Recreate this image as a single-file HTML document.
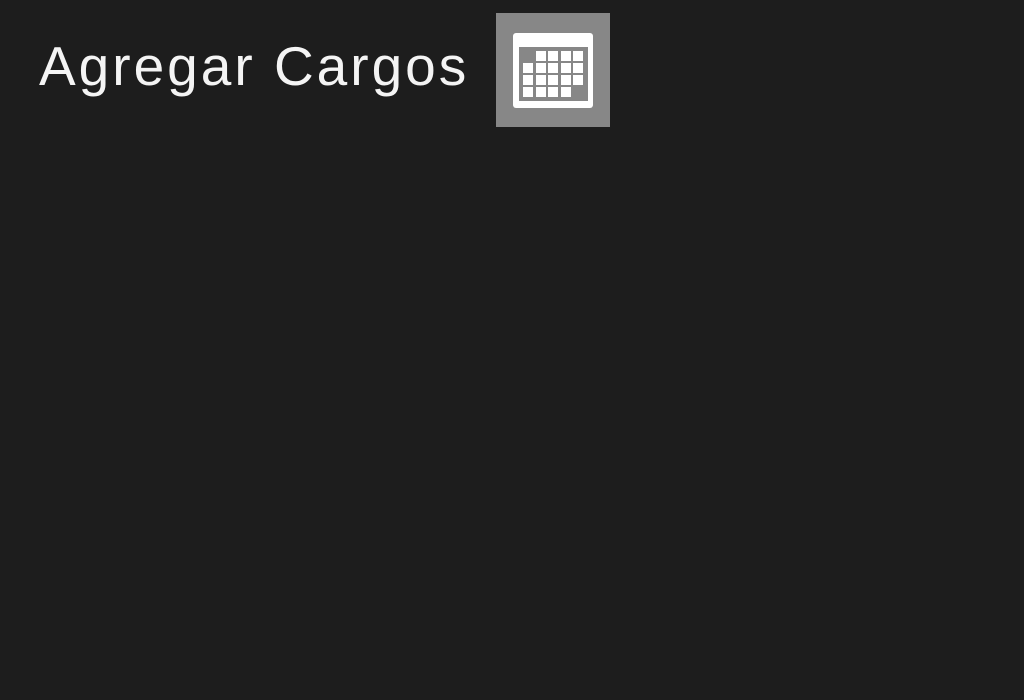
<!DOCTYPE html>
<html><head><style>
body{margin:0;width:1024px;height:700px;background:#1d1d1d;overflow:hidden;position:relative;font-family:"Liberation Sans",sans-serif}
h1{position:absolute;left:39px;top:28px;margin:0;font-weight:normal;font-size:55px;color:#f4f4f4;line-height:76px;letter-spacing:3px;white-space:nowrap}
</style></head><body>
<h1>Agregar Cargos</h1>
<svg style="position:absolute;left:496px;top:13px" width="114" height="114" viewBox="496 13 114 114">
<rect x="496" y="13" width="114" height="114" fill="#878787"/>
<rect x="513" y="33" width="80" height="75" rx="3" fill="#fff"/>
<rect x="519" y="47" width="69" height="54" fill="#878787"/>
<g fill="#fff">
<rect x="536" y="51" width="10" height="10"/><rect x="548" y="51" width="10" height="10"/><rect x="561" y="51" width="10" height="10"/><rect x="573" y="51" width="10" height="10"/>
<rect x="523" y="63" width="10" height="10"/><rect x="536" y="63" width="10" height="10"/><rect x="548" y="63" width="10" height="10"/><rect x="561" y="63" width="10" height="10"/><rect x="573" y="63" width="10" height="10"/>
<rect x="523" y="75" width="10" height="10"/><rect x="536" y="75" width="10" height="10"/><rect x="548" y="75" width="10" height="10"/><rect x="561" y="75" width="10" height="10"/><rect x="573" y="75" width="10" height="10"/>
<rect x="523" y="87" width="10" height="10"/><rect x="536" y="87" width="10" height="10"/><rect x="548" y="87" width="10" height="10"/><rect x="561" y="87" width="10" height="10"/>
</g>
</svg>
</body></html>
